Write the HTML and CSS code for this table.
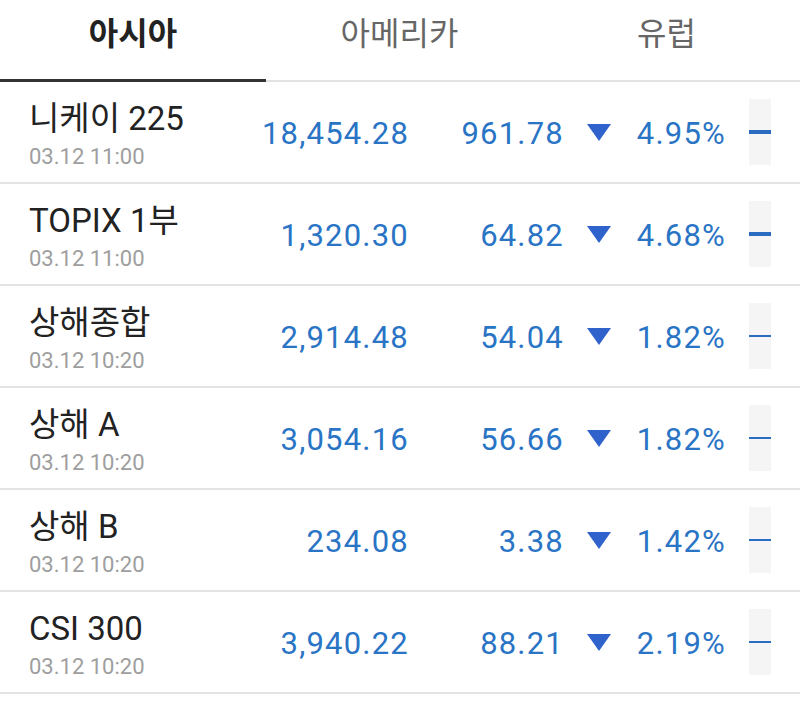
FILE: index.html
```html
<!DOCTYPE html>
<html lang="ko">
<head>
<meta charset="utf-8">
<link rel="stylesheet" href="styles.css">
</head>
<body>
<div class="tabs">
  <div class="tab active">아시아</div>
  <div class="tab">아메리카</div>
  <div class="tab">유럽</div>
</div>
<div class="list">
  <div class="row">
    <div class="name"><div class="title">니케이 225</div><div class="time">03.12 11:00</div></div>
    <div class="num">18,454.28</div>
    <div class="num">961.78</div>
    <div class="tri"></div>
    <div class="num">4.95%</div>
    <div class="gap"></div>
    <div class="spark"><span class="dash thick"></span></div>
  </div>
  <div class="row">
    <div class="name"><div class="title">TOPIX 1부</div><div class="time">03.12 11:00</div></div>
    <div class="num">1,320.30</div>
    <div class="num">64.82</div>
    <div class="tri"></div>
    <div class="num">4.68%</div>
    <div class="gap"></div>
    <div class="spark"><span class="dash thick"></span></div>
  </div>
  <div class="row">
    <div class="name"><div class="title">상해종합</div><div class="time">03.12 10:20</div></div>
    <div class="num">2,914.48</div>
    <div class="num">54.04</div>
    <div class="tri"></div>
    <div class="num">1.82%</div>
    <div class="gap"></div>
    <div class="spark"><span class="dash"></span></div>
  </div>
  <div class="row">
    <div class="name"><div class="title">상해 A</div><div class="time">03.12 10:20</div></div>
    <div class="num">3,054.16</div>
    <div class="num">56.66</div>
    <div class="tri"></div>
    <div class="num">1.82%</div>
    <div class="gap"></div>
    <div class="spark"><span class="dash"></span></div>
  </div>
  <div class="row">
    <div class="name"><div class="title">상해 B</div><div class="time">03.12 10:20</div></div>
    <div class="num">234.08</div>
    <div class="num">3.38</div>
    <div class="tri"></div>
    <div class="num">1.42%</div>
    <div class="gap"></div>
    <div class="spark"><span class="dash"></span></div>
  </div>
  <div class="row">
    <div class="name"><div class="title">CSI 300</div><div class="time">03.12 10:20</div></div>
    <div class="num">3,940.22</div>
    <div class="num">88.21</div>
    <div class="tri"></div>
    <div class="num">2.19%</div>
    <div class="gap"></div>
    <div class="spark"><span class="dash"></span></div>
  </div>
</div>
</body>
</html>
```
FILE: styles.css
```css
* { box-sizing: border-box; }
html, body { margin: 0; padding: 0; background: #fff; }
body {
  width: 800px;
  font-family: Roboto, "Noto Sans CJK KR", sans-serif;
  overflow: hidden;
}
.tabs {
  display: grid;
  grid-template-columns: 266px 267px 267px;
  height: 82px;
}
.tab {
  display: flex;
  justify-content: center;
  align-items: flex-start;
  padding-top: 11px;
  font-family: "Noto Sans CJK KR", sans-serif;
  font-size: 32px;
  line-height: 40px;
  color: #666;
  border-bottom: 2px solid #e2e2e2;
}
.tab.active {
  color: #222;
  font-weight: 700;
  border-bottom: 3px solid #333;
}
.list { display: flex; flex-direction: column; }
.row {
  display: grid;
  grid-template-columns: 233px 146px 155px 48px 114px 24px 22px;
  align-items: center;
  padding-left: 29px;
  height: 102px;
  border-bottom: 2px solid #e4e4e4;
}
.name { display: flex; flex-direction: column; margin-top: 6px; }
.title {
  font-family: Roboto, "Noto Sans CJK KR", sans-serif;
  font-size: 33px;
  line-height: 38px;
  color: #222;
}
.time {
  font-size: 22px;
  line-height: 26px;
  margin-top: 6px;
  color: #9e9e9e;
}
.num {
  text-align: right;
  font-size: 31px;
  line-height: 36px;
  letter-spacing: 1.2px;
  margin-right: -1px;
  margin-top: 4px;
  color: #2a74c5;
}
.tri {
  justify-self: end;
  width: 0;
  height: 0;
  border-left: 12px solid transparent;
  border-right: 12px solid transparent;
  border-top: 17px solid #2f62cb;
  margin-top: 0;
}
.spark {
  height: 66px;
  background: #f5f5f5;
  display: flex;
  align-items: center;
}
.dash {
  display: block;
  width: 22px;
  height: 2px;
  background: #2a6cc2;
}
.dash.thick { height: 4px; }
```
